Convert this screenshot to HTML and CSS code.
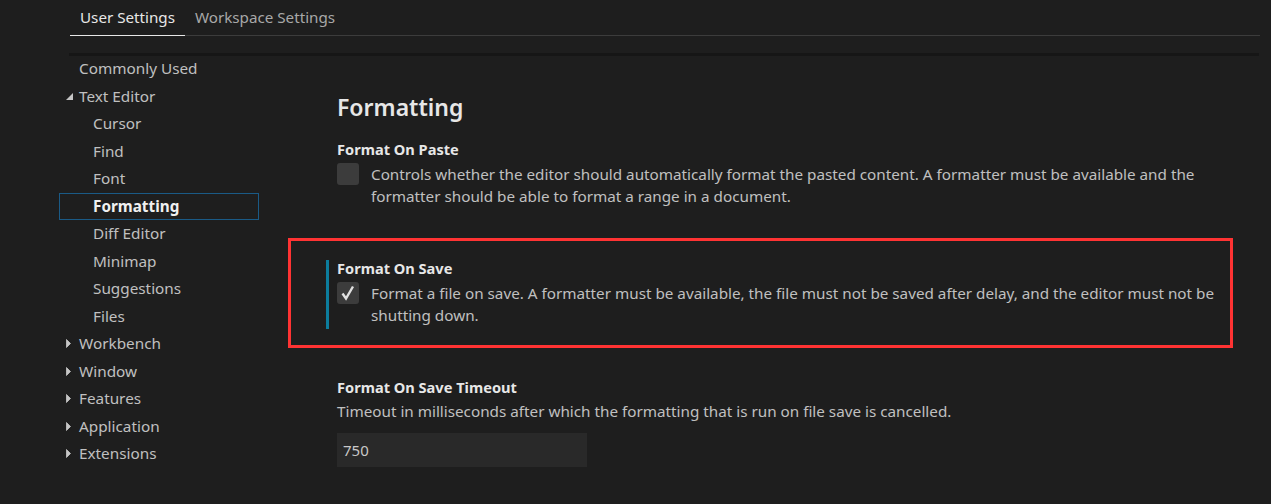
FILE: index.html
```html
<!DOCTYPE html>
<html>
<head>
<meta charset="utf-8">
<link rel="stylesheet" href="styles.css">
</head>
<body>
<div class="page">
  <div class="tabs">
    <div class="tab active">User Settings</div>
    <div class="tab">Workspace Settings</div>
  </div>
  <div class="shadow"></div>
  <div class="body">
    <nav class="tree">
      <div class="row top"><span class="twisty"></span>Commonly Used</div>
      <div class="row top"><span class="twisty"><svg width="7" height="7" viewBox="0 0 7 7"><path d="M7 0 L7 7 L0 7 Z" fill="#c5c5c5"/></svg></span>Text Editor</div>
      <div class="row sub">Cursor</div>
      <div class="row sub">Find</div>
      <div class="row sub">Font</div>
      <div class="row sub selected">Formatting</div>
      <div class="row sub">Diff Editor</div>
      <div class="row sub">Minimap</div>
      <div class="row sub">Suggestions</div>
      <div class="row sub">Files</div>
      <div class="row top"><span class="twisty"><svg width="5" height="9" viewBox="0 0 5 9"><path d="M0.5 0.5 L4.5 4.5 L0.5 8.5 Z" fill="#c5c5c5" stroke="#c5c5c5" stroke-width="0.8"/></svg></span>Workbench</div>
      <div class="row top"><span class="twisty"><svg width="5" height="9" viewBox="0 0 5 9"><path d="M0.5 0.5 L4.5 4.5 L0.5 8.5 Z" fill="#c5c5c5" stroke="#c5c5c5" stroke-width="0.8"/></svg></span>Window</div>
      <div class="row top"><span class="twisty"><svg width="5" height="9" viewBox="0 0 5 9"><path d="M0.5 0.5 L4.5 4.5 L0.5 8.5 Z" fill="#c5c5c5" stroke="#c5c5c5" stroke-width="0.8"/></svg></span>Features</div>
      <div class="row top"><span class="twisty"><svg width="5" height="9" viewBox="0 0 5 9"><path d="M0.5 0.5 L4.5 4.5 L0.5 8.5 Z" fill="#c5c5c5" stroke="#c5c5c5" stroke-width="0.8"/></svg></span>Application</div>
      <div class="row top"><span class="twisty"><svg width="5" height="9" viewBox="0 0 5 9"><path d="M0.5 0.5 L4.5 4.5 L0.5 8.5 Z" fill="#c5c5c5" stroke="#c5c5c5" stroke-width="0.8"/></svg></span>Extensions</div>
    </nav>
    <main class="main">
      <h1 class="heading">Formatting</h1>
      <div class="setting">
        <div class="title">Format On Paste</div>
        <div class="bool">
          <span class="check"></span>
          <div class="desc">Controls whether the editor should automatically format the pasted content. A formatter must be available and the formatter should be able to format a range in a document.</div>
        </div>
      </div>
      <div class="setting modified">
        <div class="title">Format On Save</div>
        <div class="bool">
          <span class="check"><svg width="22" height="22" viewBox="0 0 22 22"><path d="M5.5 11.5 L9 16.5 L16 4.5" fill="none" stroke="#e0e0e0" stroke-width="2.4" stroke-linejoin="miter"/></svg></span>
          <div class="desc">Format a file on save. A formatter must be available, the file must not be saved after delay, and the editor must not be shutting down.</div>
        </div>
      </div>
      <div class="setting">
        <div class="title">Format On Save Timeout</div>
        <div class="desc plain">Timeout in milliseconds after which the formatting that is run on file save is cancelled.</div>
        <div class="input">750</div>
      </div>
      <div class="highlight"></div>
    </main>
  </div>
</div>
</body>
</html>
```

FILE: styles.css
```css
html, body {
  margin: 0;
  padding: 0;
  background: #1e1e1e;
}
body {
  font-family: "Noto Sans", "Open Sans", sans-serif;
  color: #cccccc;
  width: 1271px;
  height: 504px;
  overflow: hidden;
}
.page {
  position: relative;
}
.tabs {
  display: flex;
  margin-left: 70px;
  width: 1190px;
  height: 35px;
  border-bottom: 1px solid #3c3c3c;
}
.tab {
  padding: 0 10px;
  line-height: 34px;
  font-size: 15.2px;
  color: #a8a8a8;
}
.tab.active {
  color: #e7e7e7;
  border-bottom: 1px solid #e7e7e7;
  margin-bottom: -1px;
}
.shadow {
  margin-left: 69px;
  margin-top: 17px;
  width: 1190px;
  height: 3px;
  background: #161616;
}
.body {
  display: flex;
  margin-top: -2px;
}
.tree {
  margin-left: 59px;
  width: 200px;
  flex: none;
  padding-top: 1px;
}
.row {
  box-sizing: border-box;
  height: 27.5px;
  line-height: 25.5px;
  border: 1px solid transparent;
  font-size: 15.3px;
  color: #c0c0c0;
  display: flex;
  align-items: center;
  white-space: nowrap;
}
.row.top {
  padding-left: 5px;
}
.row.sub {
  padding-left: 33px;
}
.twisty {
  width: 14px;
  display: inline-flex;
  align-items: center;
  justify-content: flex-start;
  padding-left: 1px;
  box-sizing: border-box;
}
.row.selected {
  border-color: #1a5a86;
  color: #f0f0f0;
  font-weight: 700;
}
.main {
  position: relative;
  margin-left: 67px;
  width: 900px;
  padding-top: 37px;
}
.heading {
  margin: 0 0 18px 11px;
  font-size: 23px;
  line-height: 32px;
  font-weight: 600;
  color: #e7e7e7;
}
.setting {
  border-left: 3px solid transparent;
  padding: 0 0 3px 8px;
  margin-bottom: 50px;
}
.setting.modified {
  border-left-color: #0c7d9d;
}
.title {
  font-size: 14.6px;
  font-weight: 700;
  color: #e7e7e7;
  line-height: 16px;
  margin-bottom: 6px;
}
.bool {
  display: flex;
  align-items: flex-start;
}
.check {
  flex: none;
  width: 22px;
  height: 22px;
  border-radius: 3px;
  background: #3c3c3c;
  margin-right: 12px;
}
.check svg {
  display: block;
}
.desc {
  font-size: 15.25px;
  line-height: 22px;
  color: #c0c0c0;
}
.desc.plain {
  margin-top: -1px;
}
.input {
  margin-top: 11px;
  width: 244px;
  height: 34px;
  line-height: 34px;
  padding-left: 6px;
  background: #292929;
  font-size: 15px;
  color: #c8c8c8;
}
.highlight {
  position: absolute;
  left: -38px;
  top: 184px;
  width: 939px;
  height: 104px;
  border: 3px solid #ff3333;
}
```
